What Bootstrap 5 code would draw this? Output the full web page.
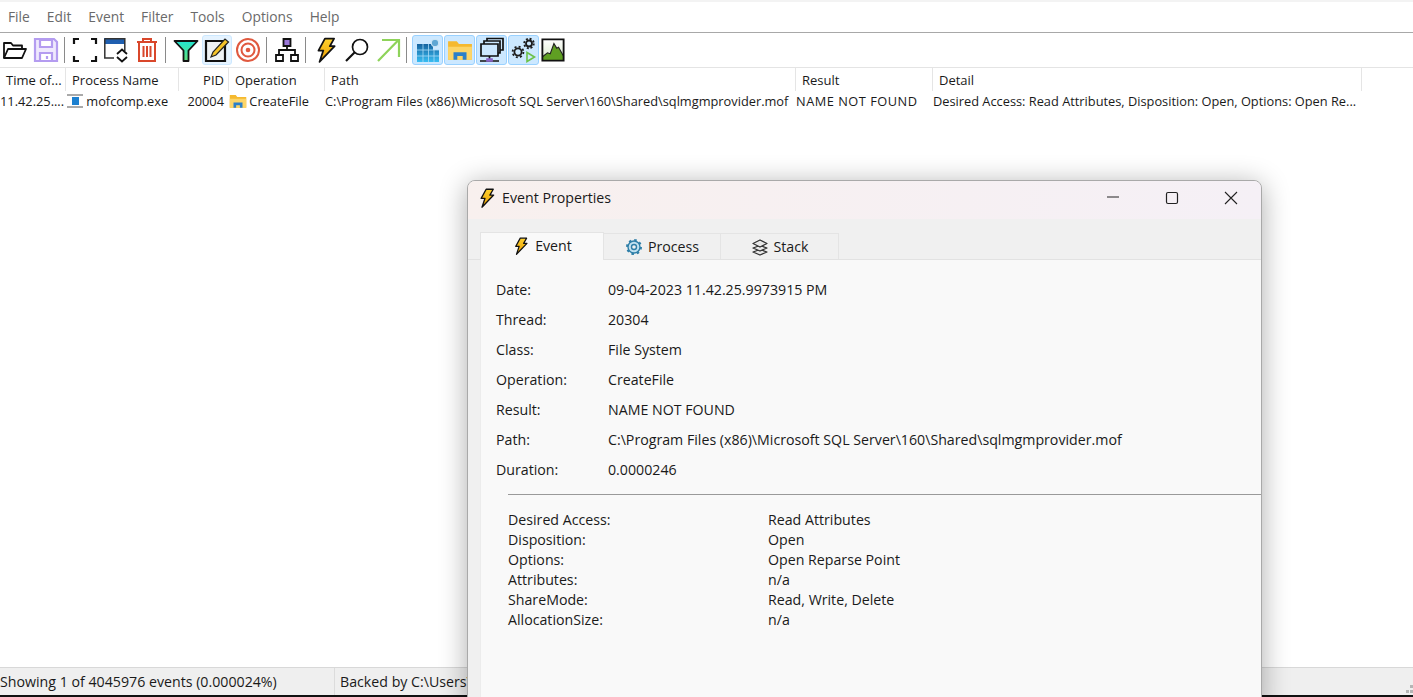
<!doctype html>
<html lang="en">
<head>
<meta charset="utf-8">
<title>Process Monitor</title>
<link href="https://cdn.jsdelivr.net/npm/bootstrap@5.3.0/dist/css/bootstrap.min.css" rel="stylesheet">
<style>
html,body{height:697px;overflow:hidden;background:#fff}
body{font-family:"Open Sans","Liberation Sans",sans-serif;font-size:13.2px;color:#1a1a1a;position:relative}
.pm-shell{height:697px}
.pm-menu{height:33px;border-top:2px solid #f3f3f3;border-bottom:1px solid #a8a8a8;padding-left:8px;font-size:13.8px;color:#6a6a6a;gap:17px}
.pm-tools{height:35px;gap:1px;border-bottom:1px solid #e4e4e4}
.pm-tb{width:30px;height:30px;border:1px solid transparent;border-radius:3px}
.pm-tb svg{width:26px;height:26px;display:block}
.pm-tb.on{background:#cce8ff;border-color:#99d1ff;width:31px}
.pm-tb.hov{background:#e5f3ff;border-color:#cce8ff}
.pm-tb.last{width:26px}
.pm-tb.last svg{width:24px;height:24px}
.pm-sep{width:1px;height:26px;background:#8a8a8a;margin:0 4px 0 2px}
.pm-grid{display:grid;grid-template-columns:66px 113px 50px 96px 471px 137px 429px}
.pm-head{height:23px}
.pm-head>div{border-right:1px solid #e5e5e5;padding-left:6px;line-height:24px;white-space:nowrap;overflow:hidden;font-size:13px}
.pm-head>div.rt{text-align:right;padding-right:4px}
.pm-row{height:20px;line-height:20px;font-size:12.8px}
.pm-row>div{white-space:nowrap;overflow:hidden}
.pm-row svg{width:18px;height:18px;vertical-align:-4px;margin-right:-1px}
.pm-res{letter-spacing:.5px}
.pm-pid{padding-right:5px}
.pm-status{height:30px;border-top:1px solid #d8d8d8;border-bottom:2px solid #111;background:#efefef;font-size:14.200px;position:relative}
.pm-status>div{line-height:27px;white-space:nowrap}
.pm-st1{width:335px;border-right:1px solid #dcdcdc}
.pm-st2{padding-left:5px}
.pm-grip{position:absolute;right:0;bottom:1px;width:8px;height:9px}
.ev-win{position:absolute;left:467px;top:180px;width:795px;height:530px;background:#f0f0f0;border:1px solid #a9a9a9;border-radius:8px 8px 0 0;box-shadow:0 4px 28px rgba(0,0,0,.33);overflow:hidden;font-size:14.2px}
.ev-title{height:38px;background:linear-gradient(90deg,#f8f0ee,#f5f0f6);padding:0 1px 4px 9px}
.ev-title svg.bolt{width:20px;height:22px;margin-right:5px}
.ev-ctl{margin-left:auto;display:flex}
.ev-ctl span{width:59px;height:34px;display:flex;align-items:center;justify-content:center}
.ev-tabs{height:41px;padding-left:12px;border-bottom:1px solid #e2e2e2;align-items:flex-end}
.ev-tab{height:26px;border:1px solid #e4e4e4;border-bottom:0;gap:5px;background:#f0f0f0}
.ev-tab svg{width:18px;height:18px}
.ev-tab.act{height:28px;background:#f9f9f9;position:relative;top:1px;width:124px;padding-bottom:2px}
.ev-tab.t2{width:117px;border-left:0}.ev-tab.t3{width:118px;border-left:0}
.ev-body{margin-left:12px;background:#f9f9f9;height:440px;padding-top:15px;border-left:1px solid #ececec}
.ev-r{height:30px;line-height:30px;padding-left:15px;white-space:nowrap}
.ev-r b{font-weight:400;display:inline-block;width:112px}
.ev-rule{margin:9px 0 15px 27px;height:1px;background:#9a9a9a}
.ev-d{height:20px;line-height:20px;padding-left:27px}
.ev-d b{font-weight:400;display:inline-block;width:260px}
</style>
</head>
<body>
<svg width="0" height="0" class="position-absolute">
<defs>
<linearGradient id="gb" x1="0" y1="0" x2="0" y2="1"><stop offset="0" stop-color="#ffd22e"/><stop offset="1" stop-color="#e89a00"/></linearGradient>
<linearGradient id="gf" x1="0" y1="0" x2="0" y2="1"><stop offset="0" stop-color="#21e3d0"/><stop offset="1" stop-color="#5fe07a"/></linearGradient>
<linearGradient id="gr" x1="0" y1="0" x2="0" y2="1"><stop offset="0" stop-color="#16639f"/><stop offset="1" stop-color="#38bdf2"/></linearGradient>
<linearGradient id="gc" x1="0" y1="0" x2="0" y2="1"><stop offset="0" stop-color="#fff"/><stop offset="1" stop-color="#d8e8c8"/></linearGradient>
<symbol id="i-bolt" viewBox="0 0 24 24"><path d="M11 1.500h8.500l-4 7h4.500L6 23l3.500-10.500H5z" fill="url(#gb)" stroke="#111" stroke-width="1.600" stroke-linejoin="round"/></symbol>
<symbol id="i-folder" viewBox="0 0 24 24"><path d="M1 4h8l2 2.500h12V21H1z" fill="#f5b92f"/><path d="M1 9h22v12H1z" fill="#fcd568"/><path d="M6 21v-7h12v7h-3.500v-3.500h-5V21z" fill="#2a7fc9"/></symbol>
</defs>
</svg>
<div class="pm-shell d-flex flex-column">
  <div class="pm-menu d-flex align-items-center"><span>File</span><span>Edit</span><span>Event</span><span>Filter</span><span>Tools</span><span>Options</span><span>Help</span></div>
  <div class="pm-tools d-flex align-items-center">
    <div class="pm-tb d-flex align-items-center justify-content-center"><svg viewBox="0 0 26 26" fill="none" stroke="#111" stroke-width="1.800" stroke-linejoin="round"><path d="M2 21V6h7l2 2.500h9V12"/><path d="M2 21l4-9h18l-4 9z"/></svg></div>
    <div class="pm-tb d-flex align-items-center justify-content-center"><svg viewBox="0 0 26 26" fill="#efe9fd" stroke="#b49cf0" stroke-width="2.200"><path d="M2 2h19l3 3v19H2z"/><path d="M7 3h12v7H7zM7 24v-8h12v8z" fill="#fff"/><path d="M14 19v3" /></svg></div>
    <div class="pm-sep"></div>
    <div class="pm-tb d-flex align-items-center justify-content-center"><svg viewBox="0 0 26 26" fill="none" stroke="#111" stroke-width="2.200"><path d="M2 7V2h5M19 2h5v5M24 19v5h-5M7 24H2v-5"/></svg></div>
    <div class="pm-tb d-flex align-items-center justify-content-center"><svg viewBox="0 0 26 26" fill="none"><path d="M1 1h21v6H1z" fill="#1f5fb0"/><path d="M1.800 1.800h20V14M1.800 1.800V21H11" stroke="#333" stroke-width="1.500"/><path d="M14 17l5-4.500 5 4.500M14 20l5 4.500 5-4.500" stroke="#111" stroke-width="1.800"/></svg></div>
    <div class="pm-tb d-flex align-items-center justify-content-center"><svg viewBox="0 0 26 26" fill="none" stroke="#d9472b" stroke-width="2"><path d="M3 5h20M9 5V2h8v3"/><path d="M5 5v19h16V5"/><path d="M9.500 9v11M13 9v11M16.500 9v11"/></svg></div>
    <div class="pm-sep"></div>
    <div class="pm-tb d-flex align-items-center justify-content-center"><svg viewBox="0 0 26 26"><path d="M1.500 4h23L15.500 13.500V24h-5V13.500z" fill="url(#gf)" stroke="#111" stroke-width="1.800" stroke-linejoin="round"/></svg></div>
    <div class="pm-tb hov d-flex align-items-center justify-content-center"><svg viewBox="0 0 26 26" fill="none"><path d="M2 4h19v20H2z" fill="#eef2f4" stroke="#111" stroke-width="2.200"/><path d="M7 20l2-5L21 2l3.500 3L12 18z" fill="#f6c428" stroke="#222" stroke-width="1.200"/></svg></div>
    <div class="pm-tb d-flex align-items-center justify-content-center"><svg viewBox="0 0 26 26" fill="none" stroke="#e0593f"><circle cx="13" cy="13" r="11" stroke-width="2"/><circle cx="13" cy="13" r="6.500" stroke-width="2"/><circle cx="13" cy="13" r="2.300" fill="#e0593f" stroke="none"/></svg></div>
    <div class="pm-sep"></div>
    <div class="pm-tb d-flex align-items-center justify-content-center"><svg viewBox="0 0 26 26" fill="none" stroke="#111" stroke-width="1.800"><path d="M9.500 2h7v7h-7z" fill="#9a77d8"/><path d="M13 9v4M5 18v-5h16v5"/><path d="M2 18h7v6H2zM17 18h7v6h-7z" fill="#fff"/></svg></div>
    <div class="pm-sep"></div>
    <div class="pm-tb d-flex align-items-center justify-content-center"><svg viewBox="0 0 24 24"><use href="#i-bolt"/></svg></div>
    <div class="pm-tb d-flex align-items-center justify-content-center"><svg viewBox="0 0 26 26" fill="none" stroke="#111"><circle cx="16" cy="10" r="7.500" stroke-width="1.700"/><path d="M10.500 15.500L2 24" stroke-width="2.200"/></svg></div>
    <div class="pm-tb d-flex align-items-center justify-content-center"><svg viewBox="0 0 26 26" fill="none" stroke="#8ed35a" stroke-width="2.200"><path d="M3 24L23.500 3M7 3h17v17"/></svg></div>
    <div class="pm-sep"></div>
    <div class="pm-tb on d-flex align-items-center justify-content-center"><svg viewBox="0 0 26 26"><path d="M2 7h16v6h6v12H2z" fill="url(#gr)"/><path d="M2 13h22M2 19h22M8 7v18M13.500 7v18M19 13v12" stroke="#a9dcf7" stroke-width=".8"/><circle cx="20" cy="6" r="3.800" fill="#5fa7d4" stroke="#d5ebf8"/></svg></div>
    <div class="pm-tb on d-flex align-items-center justify-content-center"><svg viewBox="0 0 24 24"><use href="#i-folder"/></svg></div>
    <div class="pm-tb on d-flex align-items-center justify-content-center"><svg viewBox="0 0 26 26" fill="none" stroke="#111" stroke-width="1.700"><path d="M8 4V1.500h16V13h-3"/><path d="M5 7V4h16v12h-2"/><path d="M2 7h17v12H2z" fill="#cce8ff"/><path d="M10.500 19v4M1 24h19"/><path d="M8 22h5v2H8z" fill="#8a64c8" stroke="#8a64c8"/></svg></div>
    <div class="pm-tb on d-flex align-items-center justify-content-center"><svg viewBox="0 0 26 26" fill="none" stroke="#1c1c1c"><circle cx="7" cy="15" r="3.600" stroke-width="1.800"/><circle cx="7" cy="15" r="5.400" stroke-width="1.800" stroke-dasharray="2 2.240"/><circle cx="18" cy="6.500" r="3" stroke-width="1.800"/><circle cx="18" cy="6.500" r="4.800" stroke-width="1.800" stroke-dasharray="2 1.770"/><path d="M16 15.500l7.500 4.500-7.500 4.500z" stroke="#6cc24a" stroke-width="1.600"/></svg></div>
    <div class="pm-tb last d-flex align-items-center justify-content-center"><svg viewBox="0 0 26 26"><path d="M1.500 1.500h23v23H1.500z" fill="url(#gc)"/><path d="M2 20l5-4 3 1 4-11 3 5 2-1 5 9v5H2z" fill="#5f9f22"/><path d="M2 20l5-4 3 1 4-11 3 5 2-1 5 9" fill="none" stroke="#222" stroke-width="1.200"/><path d="M1.500 1.500h23v23H1.500z" fill="none" stroke="#111" stroke-width="2"/></svg></div>
  </div>
  <div class="pm-grid pm-head">
    <div>Time of...</div><div>Process Name</div><div class="rt">PID</div><div>Operation</div><div>Path</div><div>Result</div><div>Detail</div>
  </div>
  <div class="pm-grid pm-row">
    <div>11.42.25....</div>
    <div><svg viewBox="0 0 18 18"><path d="M1 3h16M1 15h16" stroke="#555" stroke-width="1"/><path d="M6 5h7v8H6z" fill="#1c80d0"/></svg> mofcomp.exe</div>
    <div class="text-end pm-pid">20004</div>
    <div><svg viewBox="0 0 24 24"><use href="#i-folder"/></svg> CreateFile</div>
    <div>C:\Program Files (x86)\Microsoft SQL Server\160\Shared\sqlmgmprovider.mof</div>
    <div class="pm-res">NAME NOT FOUND</div>
    <div>Desired Access: Read Attributes, Disposition: Open, Options: Open Re...</div>
  </div>
  <div class="flex-grow-1"></div>
  <div class="pm-status d-flex">
    <div class="pm-st1">Showing 1 of 4045976 events (0.000024%)</div>
    <div class="pm-st2">Backed by C:\Users\</div>
    <svg class="pm-grip" viewBox="0 0 8 9" fill="#b5b5b5"><rect x="5" y="0" width="3" height="3"/><rect x="1" y="5" width="3" height="3"/><rect x="5" y="5" width="3" height="3"/></svg>
  </div>
</div>
<div class="ev-win">
  <div class="ev-title d-flex align-items-center">
    <svg class="bolt" viewBox="0 0 24 24"><use href="#i-bolt"/></svg><span>Event Properties</span>
    <div class="ev-ctl">
      <span><svg width="14" height="14" viewBox="0 0 14 14"><path d="M1 6h12" stroke="#222" stroke-width="1"/></svg></span>
      <span><svg width="14" height="14" viewBox="0 0 14 14" fill="none"><rect x="1.500" y="1.500" width="11" height="11" rx="1.500" stroke="#222" stroke-width="1.200"/></svg></span>
      <span><svg width="14" height="14" viewBox="0 0 14 14"><path d="M1 1l12 12M13 1L1 13" stroke="#222" stroke-width="1.100"/></svg></span>
    </div>
  </div>
  <div class="ev-tabs d-flex">
    <div class="ev-tab act d-flex align-items-center justify-content-center"><svg viewBox="0 0 24 24"><use href="#i-bolt"/></svg>Event</div>
    <div class="ev-tab t2 d-flex align-items-center justify-content-center"><svg viewBox="0 0 18 18" fill="#bfe0f0" stroke="#2f7fa8" stroke-width="1.400"><circle cx="9" cy="9" r="6"/><circle cx="9" cy="9" r="2.500" fill="#f0f0f0"/><circle cx="9" cy="9" r="7" fill="none" stroke-dasharray="2.500 3" stroke-width="2"/></svg>Process</div>
    <div class="ev-tab t3 d-flex align-items-center justify-content-center"><svg viewBox="0 0 18 18" fill="#e8e8e8" stroke="#333" stroke-width="1.300" stroke-linejoin="round"><path d="M9 11.500L2 14l7 3 7-3z"/><path d="M9 7.500L2 10l7 3 7-3z"/><path d="M9 2L2 5.500 9 9l7-3.500z"/></svg>Stack</div>
  </div>
  <div class="ev-body">
    <div class="ev-r"><b>Date:</b>09-04-2023 11.42.25.9973915 PM</div>
    <div class="ev-r"><b>Thread:</b>20304</div>
    <div class="ev-r"><b>Class:</b>File System</div>
    <div class="ev-r"><b>Operation:</b>CreateFile</div>
    <div class="ev-r"><b>Result:</b>NAME NOT FOUND</div>
    <div class="ev-r"><b>Path:</b>C:\Program Files (x86)\Microsoft SQL Server\160\Shared\sqlmgmprovider.mof</div>
    <div class="ev-r"><b>Duration:</b>0.0000246</div>
    <div class="ev-rule"></div>
    <div class="ev-d"><b>Desired Access:</b>Read Attributes</div>
    <div class="ev-d"><b>Disposition:</b>Open</div>
    <div class="ev-d"><b>Options:</b>Open Reparse Point</div>
    <div class="ev-d"><b>Attributes:</b>n/a</div>
    <div class="ev-d"><b>ShareMode:</b>Read, Write, Delete</div>
    <div class="ev-d"><b>AllocationSize:</b>n/a</div>
  </div>
</div>
</body>
</html>
